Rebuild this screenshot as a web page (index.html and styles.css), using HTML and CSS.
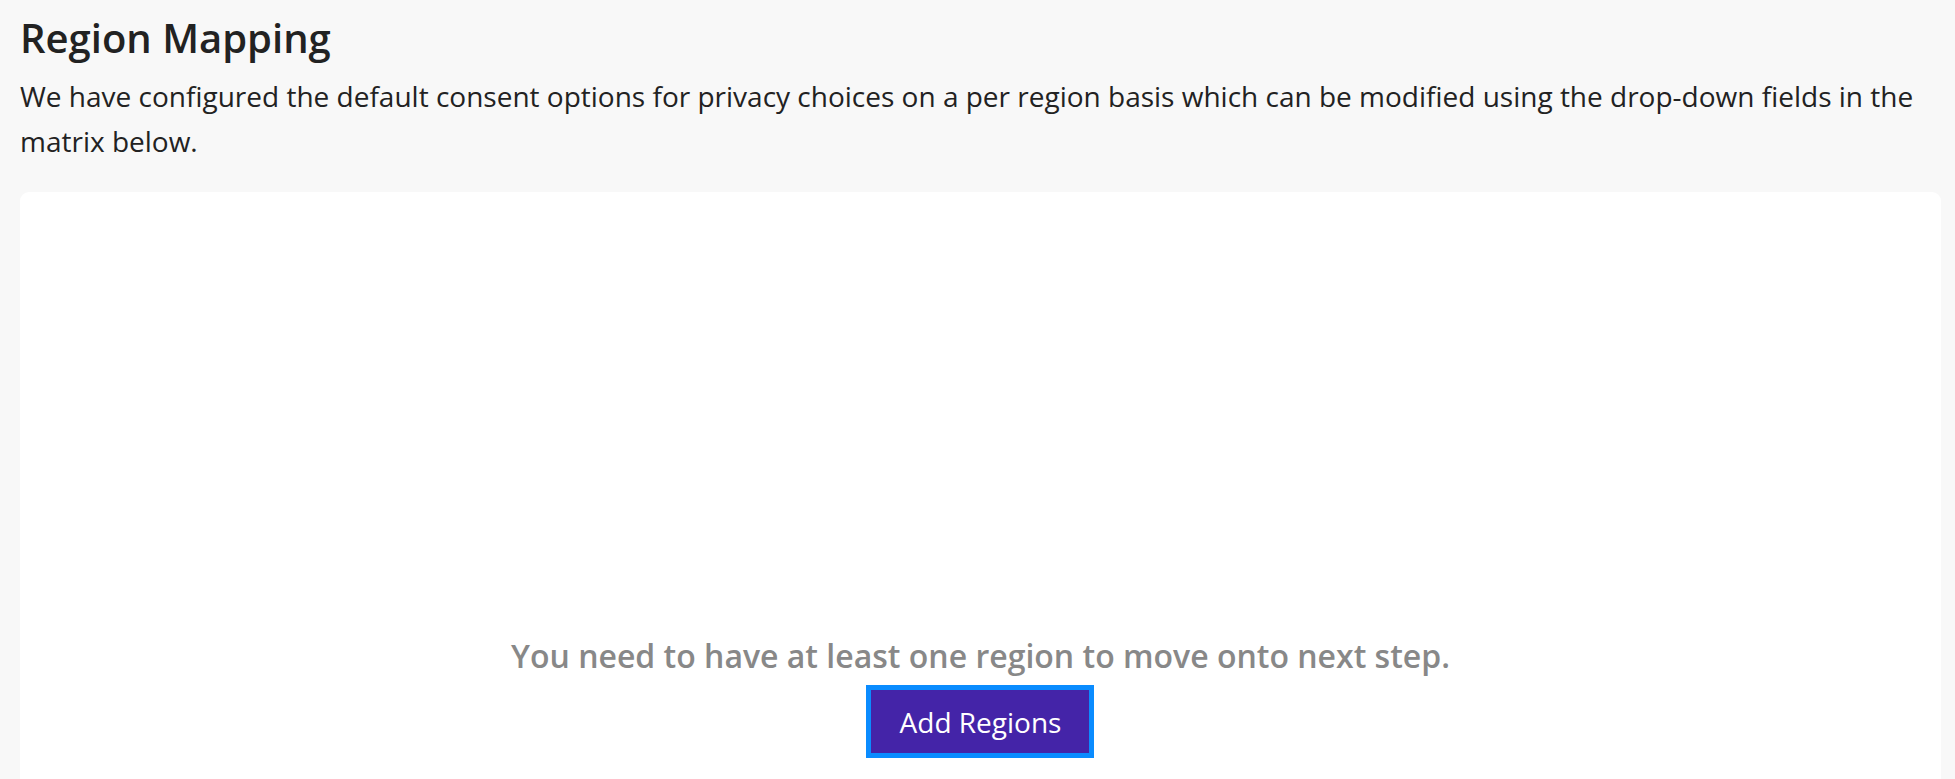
FILE: index.html
```html
<!DOCTYPE html>
<html lang="en">
<head>
<meta charset="utf-8">
<title>Region Mapping</title>
<link rel="stylesheet" href="styles.css">
</head>
<body>
<main class="page">
  <h1 class="title">Region Mapping</h1>
  <p class="intro">We have configured the default consent options for privacy choices on a per region basis which can be modified using the drop-down fields in the matrix below.</p>
  <section class="card">
    <div class="empty">
      <p class="empty-msg">You need to have at least one region to move onto next step.</p>
      <button class="btn-add" type="button">Add Regions</button>
    </div>
  </section>
</main>
</body>
</html>
```
FILE: styles.css
```css
html, body {
  margin: 0;
  padding: 0;
  background: #f8f8f8;
  height: 100%;
  overflow: hidden;
}
body {
  font-family: "Open Sans", "Noto Sans", sans-serif;
  color: #222;
}
.page {
  padding: 0 14px 0 20px;
}
.title {
  margin: 0;
  padding-top: 10px;
  font-size: 40px;
  font-weight: 600;
  line-height: 56px;
  color: #222;
}
.intro {
  margin: 8px 0 0;
  font-size: 28px;
  line-height: 45px;
  color: #222;
}
.card {
  margin-top: 28px;
  background: #fff;
  border-radius: 9px;
  height: 700px;
  display: flex;
  flex-direction: column;
  align-items: center;
}
.empty {
  padding-top: 442px;
  display: flex;
  flex-direction: column;
  align-items: center;
}
.empty-msg {
  margin: 0;
  font-size: 32px;
  font-weight: 600;
  color: #888;
  line-height: 44px;
}
.btn-add {
  margin-top: 7px;
  font-family: inherit;
  font-size: 28px;
  color: #fff;
  background: #4424a8;
  border: 5px solid #0a8cff;
  border-radius: 0;
  width: 228px;
  height: 73px;
  padding: 0;
  cursor: pointer;
}
```
